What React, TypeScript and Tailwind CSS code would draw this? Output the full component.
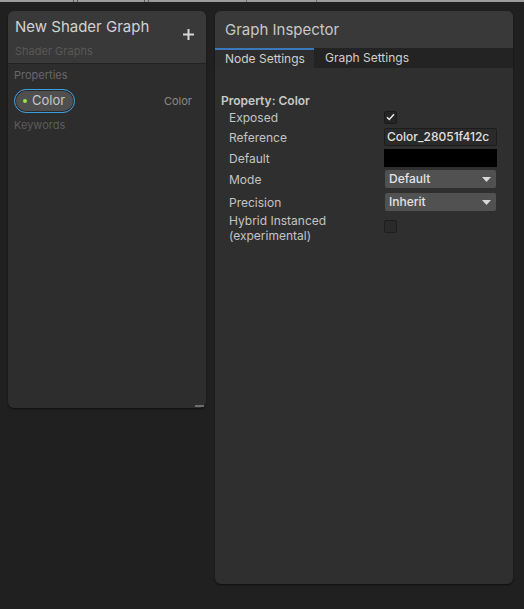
import React from 'react'

const font = { fontFamily: 'Inter, "Noto Sans", sans-serif' }

function Row({ label, children, h = 'h-[20px]', top }: { label: React.ReactNode; children: React.ReactNode; h?: string; top?: boolean }) {
  return (
    <div className={`flex ${top ? 'items-start' : 'items-center'} ${h} pl-[14px] pr-[16px]`}>
      <div className="w-[155px] text-[12px] leading-[15px] text-[#c4c4c4]">{label}</div>
      <div className="flex-1">{children}</div>
    </div>
  )
}

function Dropdown({ value }: { value: string }) {
  return (
    <div className="flex items-center justify-between h-[18px] mx-[1px] px-[4px] rounded-[2px] bg-[#515151] text-[12px] font-medium text-[#e4e4e4]">
      <span>{value}</span>
      <svg width="9" height="5" viewBox="0 0 9 5" className="mr-[1px]">
        <path d="M0 0h9L4.5 5z" fill="#d8d8d8" />
      </svg>
    </div>
  )
}

export default function App() {
  return (
    <div style={font} className="w-[524px] h-[609px] bg-[#202020] overflow-hidden flex flex-col">
      {/* top ruler strip */}
      <div className="relative h-[2px] bg-[#9c9c9c] shrink-0">
        <div className="absolute left-[73px] top-0 w-[1px] h-[2px] bg-[#5c5c5c]" />
        <div className="absolute left-[77px] top-0 w-[1px] h-[2px] bg-[#5c5c5c]" />
        <div className="absolute left-[144px] top-0 w-[1px] h-[2px] bg-[#5c5c5c]" />
        <div className="absolute left-[148px] top-0 w-[1px] h-[2px] bg-[#5c5c5c]" />
        <div className="absolute left-[246px] top-0 w-[1px] h-[2px] bg-[#6c6c6c]" />
        <div className="absolute left-[316px] top-0 w-[1px] h-[2px] bg-[#6c6c6c]" />
      </div>

      <div className="flex items-start gap-[9px] pl-[8px] pt-[9px]">
        {/* Blackboard */}
        <div className="relative w-[198px] h-[397px] rounded-[6px] bg-[#2d2d2d] overflow-hidden shadow-[0_1px_2px_rgba(0,0,0,0.6)]">
          <div className="flex items-start justify-between h-[53px] bg-[#393939] border-b border-[#222222] pl-[7px] pr-[12px]">
            <div className="pt-[7px]">
              <div className="text-[15px] leading-[18px] text-[#d2d2d2]">New Shader Graph</div>
              <div className="text-[11px] leading-[14px] mt-[8px] text-[#585858]">Shader Graphs</div>
            </div>
            <div className="pt-[18px] text-[#d8d8d8]">
              <svg width="11" height="11" viewBox="0 0 11 11">
                <path d="M4.5 0h2v11h-2zM0 4.5h11v2H0z" fill="#d6d6d6" />
              </svg>
            </div>
          </div>
          <div className="pl-[6px] pr-[14px]">
            <div className="text-[11px] leading-[14px] mt-[4px] text-[#676767]">Properties</div>
            <div className="flex items-center justify-between mt-[7px]">
              <div className="flex items-center gap-[5px] h-[24px] pl-[8px] pr-[9px] rounded-full bg-[#4f4f4f] border-[1.5px] border-[#3a9fe0] shadow-[inset_0_0_0_1px_#2a2a2a]">
                <span className="w-[4px] h-[4px] rounded-full bg-[#9ee14c]" />
                <span className="text-[13px] text-[#c8c8c8]">Color</span>
              </div>
              <span className="text-[11px] text-[#8a8a8a]">Color</span>
            </div>
            <div className="text-[11px] leading-[14px] mt-[5px] text-[#5c5c5c]">Keywords</div>
          </div>
          <div className="absolute right-[2px] bottom-[1px] w-[9px] h-[2px] bg-[#6e6e6e]" />
        </div>

        {/* Graph Inspector */}
        <div className="w-[298px] h-[573px] rounded-[6px] bg-[#2f2f2f] overflow-hidden shadow-[0_1px_2px_rgba(0,0,0,0.6)]">
          <div className="h-[37px] bg-[#393939] pl-[10px] pt-[10px] text-[15px] leading-[18px] text-[#c8c8c8]">Graph Inspector</div>
          <div className="flex h-[20px] bg-[#232323] text-[12px] text-[#d0d0d0]">
            <div className="w-[99px] pl-[10px] bg-[#2d2d2d] border-t-2 border-[#3a79bb] leading-[17px]">Node Settings</div>
            <div className="pl-[11px] leading-[20px]">Graph Settings</div>
          </div>
          <div className="pt-[26px]">
            <div className="pl-[6px] text-[12px] leading-[14px] font-semibold text-[#c8c8c8]">Property: Color</div>
            <div className="flex flex-col gap-[1px]">
              <Row label="Exposed" h="h-[18px]">
                <div className="w-[13px] h-[13px] rounded-[2px] bg-[#242424] border border-[#1a1a1a] flex items-center justify-center">
                  <svg width="9" height="8" viewBox="0 0 9 8">
                    <path d="M1 4.2l2.3 2.3L8 1.2" stroke="#eaeaea" strokeWidth="1.5" fill="none" />
                  </svg>
                </div>
              </Row>
              <Row label="Reference">
                <div className="h-[18px] rounded-[2px] bg-[#2a2a2a] border border-[#1d1d1d] pl-[2px] text-[12px] leading-[16px] font-medium text-[#e0e0e0] overflow-hidden whitespace-nowrap">Color_28051f412c</div>
              </Row>
              <Row label="Default">
                <div className="h-[18px] bg-black" />
              </Row>
              <Row label="Mode">
                <Dropdown value="Default" />
              </Row>
              <div className="h-[1px]" />
              <Row label="Precision">
                <Dropdown value="Inherit" />
              </Row>
              <Row label={<>Hybrid Instanced<br />(experimental)</>} h="h-[32px]" top>
                <div className="mt-[7px] w-[13px] h-[13px] rounded-[2px] bg-[#2a2a2a] border border-[#1e1e1e]" />
              </Row>
            </div>
          </div>
        </div>
      </div>
    </div>
  )
}
